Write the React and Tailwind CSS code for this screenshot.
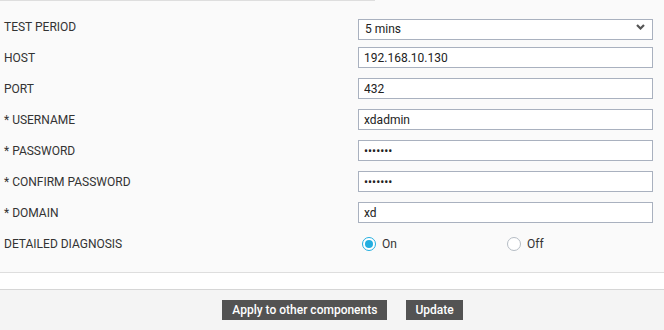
import React, { useState } from 'react';

const rows = [
  { label: 'HOST', value: '192.168.10.130', type: 'text' },
  { label: 'PORT', value: '432', type: 'text' },
  { label: '* USERNAME', value: 'xdadmin', type: 'text' },
  { label: '* PASSWORD', value: 'abcdefg', type: 'password' },
  { label: '* CONFIRM PASSWORD', value: 'abcdefg', type: 'password' },
  { label: '* DOMAIN', value: 'xd', type: 'text' },
];

function Radio({ checked, label, onClick }) {
  return (
    <button onClick={onClick} className="flex items-center gap-[6px] w-[145px] text-left">
      <span
        className={`w-[14px] h-[14px] rounded-full border flex items-center justify-center bg-white ${
          checked ? 'border-[#22aee0]' : 'border-[#b5bcc4]'
        }`}
      >
        {checked && <span className="w-[8px] h-[8px] rounded-full bg-[#22aee0]"></span>}
      </span>
      <span className="text-[12px] text-[#333]">{label}</span>
    </button>
  );
}

export default function App() {
  const [period, setPeriod] = useState('5 mins');
  const [diag, setDiag] = useState('on');

  return (
    <div className="w-[664px] h-[330px] bg-[#fafafa] text-[#333] overflow-hidden" style={{ fontFamily: 'Roboto, "Liberation Sans", sans-serif' }}>
      <div className="h-px w-[375px] bg-[#dedede]"></div>

      <div className="flex flex-col gap-[10px] pt-[15px] pb-[18px]">
        <div className="flex items-center h-[21px]">
          <div className="w-[358px] pl-[4px] text-[12px]">TEST PERIOD</div>
          <div className="relative w-[295px] h-[21px]">
            <select
              value={period}
              onChange={(e) => setPeriod(e.target.value)}
              className="appearance-none w-full h-full border border-[#a9b1bf] bg-white pl-[6px] text-[12px] text-[#222] outline-none"
            >
              <option>5 mins</option>
              <option>10 mins</option>
              <option>15 mins</option>
            </select>
            <svg className="absolute right-[8px] top-[8px] pointer-events-none" width="9" height="6" viewBox="0 0 9 6">
              <path d="M1 1 L4.5 4.5 L8 1" fill="none" stroke="#555" strokeWidth="2.2" />
            </svg>
          </div>
        </div>

        {rows.map((r) => (
          <div key={r.label} className="flex items-center h-[21px]">
            <div className="w-[358px] pl-[4px] text-[12px]">{r.label}</div>
            <input
              type={r.type}
              defaultValue={r.value}
              className="w-[295px] h-[21px] border border-[#a9b1bf] bg-white px-[5px] text-[12px] text-[#222] outline-none"
            />
          </div>
        ))}

        <div className="flex items-center h-[21px]">
          <div className="w-[362px] pl-[4px] text-[12px]">DETAILED DIAGNOSIS</div>
          <Radio checked={diag === 'on'} label="On" onClick={() => setDiag('on')} />
          <Radio checked={diag === 'off'} label="Off" onClick={() => setDiag('off')} />
        </div>
      </div>

      <div className="h-[17px] bg-white border-t border-[#dedede]"></div>

      <div className="h-[41px] bg-[#f4f4f4] border-t border-[#d6d6d6] flex justify-center items-start pt-[10px] gap-[19px] pl-[21px]">
        <button className="h-[20px] px-[10px] bg-[#535353] text-white text-[12px] font-medium">Apply to other components</button>
        <button className="h-[20px] px-[9px] bg-[#535353] text-white text-[12px] font-medium">Update</button>
      </div>
    </div>
  );
}
